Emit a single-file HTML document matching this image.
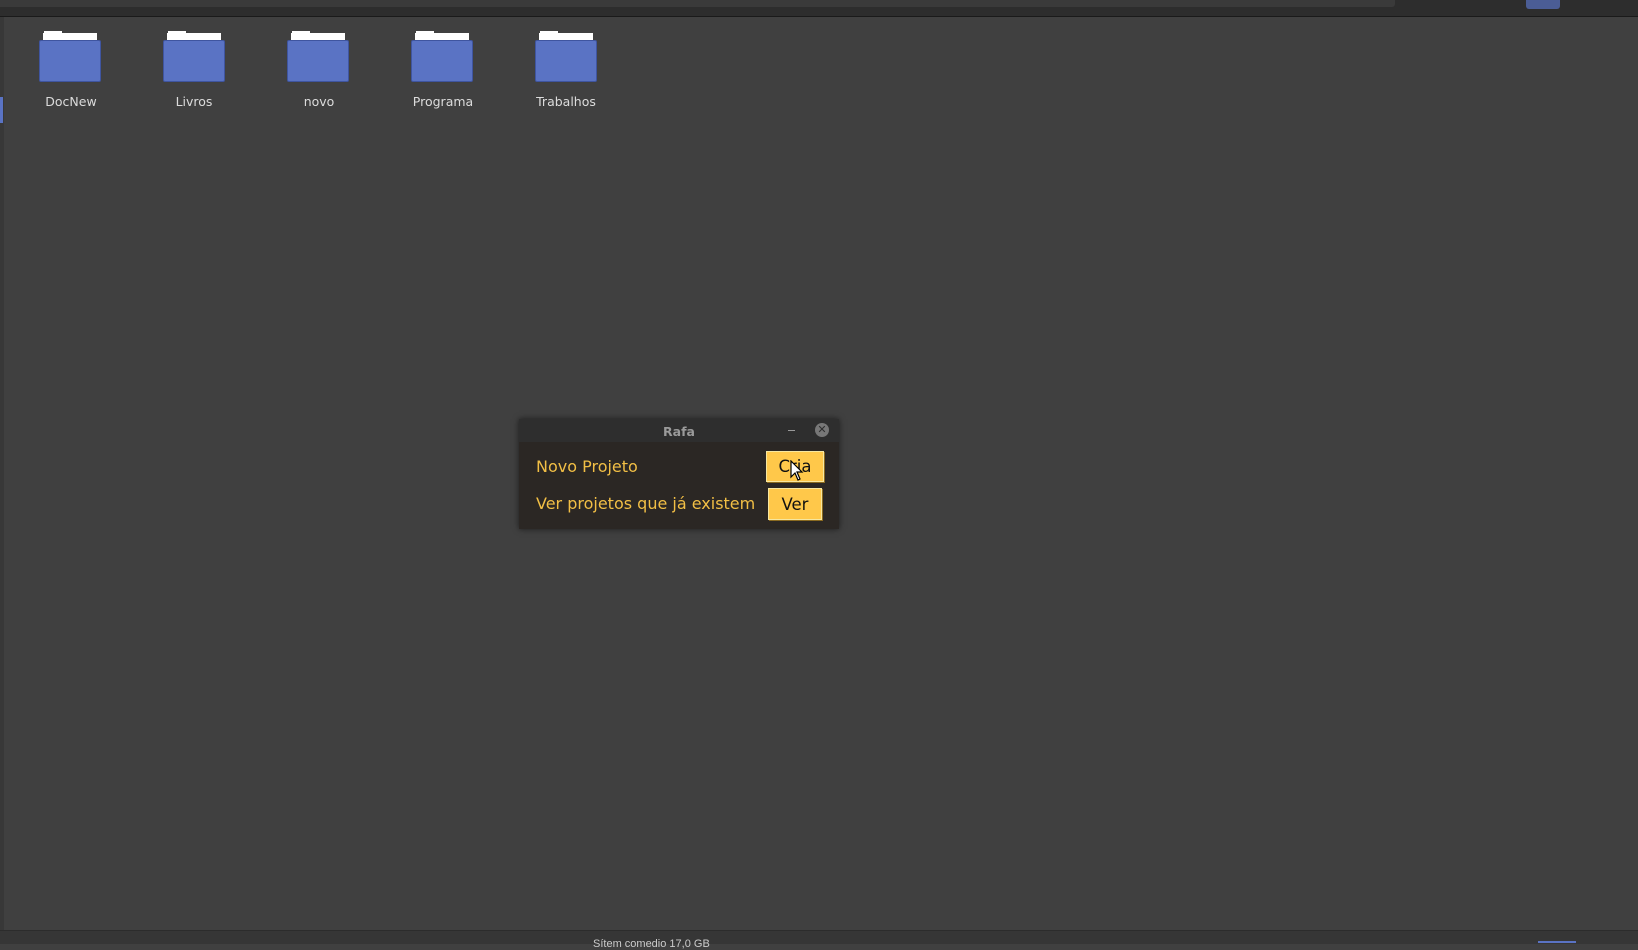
<!DOCTYPE html>
<html><head><meta charset="utf-8"><style>
body{margin:0;width:1638px;height:943px;background:#404040;position:relative;overflow:hidden;font-family:"Liberation Sans","DejaVu Sans",sans-serif}
.a{position:absolute}
.f{position:absolute;top:33px;width:62px;height:48px}
.f .t{position:absolute;left:4px;top:0;width:54px;height:8px;background:#fff}
.f .t2{position:absolute;left:5px;top:-2px;width:18px;height:4px;background:#fff}
.f .b{position:absolute;left:0;top:7px;width:60px;height:40px;background:#5a73c4;border:1px solid #3f55a0;border-radius:2px}
.l{position:absolute;top:94px;width:120px;text-align:center;color:#dcdcdc;font-size:12.5px;font-family:"DejaVu Sans",sans-serif}
.btn{position:absolute;background:#ffc84a;border:1px solid #f7e7a0;box-shadow:1px 1px 0 #8a6a20;color:#111;font-size:16.5px;text-align:center;font-family:"DejaVu Sans",sans-serif}
.tx{position:absolute;color:#f2bf45;font-size:16px;font-family:"DejaVu Sans",sans-serif}
</style></head><body>
<div class="a" style="left:0;top:0;width:1638px;height:16px;background:#2d2d2d;border-bottom:1px solid #1a1a1a"></div>
<div class="a" style="left:0;top:0;width:1395px;height:7px;background:#3a3a3a;border-radius:0 0 3px 0"></div>
<div class="a" style="left:1526px;top:0;width:34px;height:9px;background:#4b5d95;border-radius:0 0 3px 3px"></div>
<div class="a" style="left:0;top:17px;width:4px;height:913px;background:#383838"></div>
<div class="a" style="left:0;top:97px;width:3px;height:26px;background:#5a73c4"></div>

<div class="f" style="left:39px"><div class="t2"></div><div class="t"></div><div class="b"></div></div>
<div class="f" style="left:163px"><div class="t2"></div><div class="t"></div><div class="b"></div></div>
<div class="f" style="left:287px"><div class="t2"></div><div class="t"></div><div class="b"></div></div>
<div class="f" style="left:411px"><div class="t2"></div><div class="t"></div><div class="b"></div></div>
<div class="f" style="left:535px"><div class="t2"></div><div class="t"></div><div class="b"></div></div>
<div class="l" style="left:11px">DocNew</div>
<div class="l" style="left:134px">Livros</div>
<div class="l" style="left:259px">novo</div>
<div class="l" style="left:383px">Programa</div>
<div class="l" style="left:506px">Trabalhos</div>

<div class="a" style="left:0;top:930px;width:1638px;height:13px;background:#363636;border-top:1px solid #2c2c2c"></div>
<div class="a" style="left:593px;top:938px;color:#ccc;font-size:11px">Sítem   comedio   17,0 GB</div>
<div class="a" style="left:1538px;top:941px;width:38px;height:2px;background:#5a73c4"></div>

<div class="a" style="left:519px;top:419px;width:320px;height:110px;background:#2b2724;box-shadow:0 0 6px rgba(0,0,0,.6)">
 <div class="a" style="left:0;top:0;width:320px;height:23px;background:#2e2e2e"></div>
 <div class="a" style="left:0;top:5px;width:320px;text-align:center;color:#9a9a9a;font-size:12.5px;font-weight:bold;font-family:'DejaVu Sans',sans-serif">Rafa</div>
 <div class="a" style="left:269px;top:11px;width:7px;height:1px;background:#999"></div>
 <div class="a" style="left:296px;top:4px;width:14px;height:14px;border-radius:50%;background:#777;color:#2e2e2e;font-size:11px;line-height:14px;text-align:center;font-weight:bold">✕</div>
 <div class="tx" style="left:17px;top:38px">Novo Projeto</div>
 <div class="tx" style="left:17px;top:75px">Ver projetos que já existem</div>
 <div class="btn" style="left:247px;top:32px;width:56px;height:29px;line-height:30px">Cria</div>
 <div class="btn" style="left:249px;top:69px;width:52px;height:30px;line-height:31px">Ver</div>
</div>
<svg class="a" style="left:790px;top:460px" width="14" height="22" viewBox="0 0 14 22"><path d="M1 1 L1 17 L5 13 L8 20 L10 19 L7 12 L12 12 Z" fill="#fff" stroke="#000" stroke-width="1.2"/></svg>
</body></html>
